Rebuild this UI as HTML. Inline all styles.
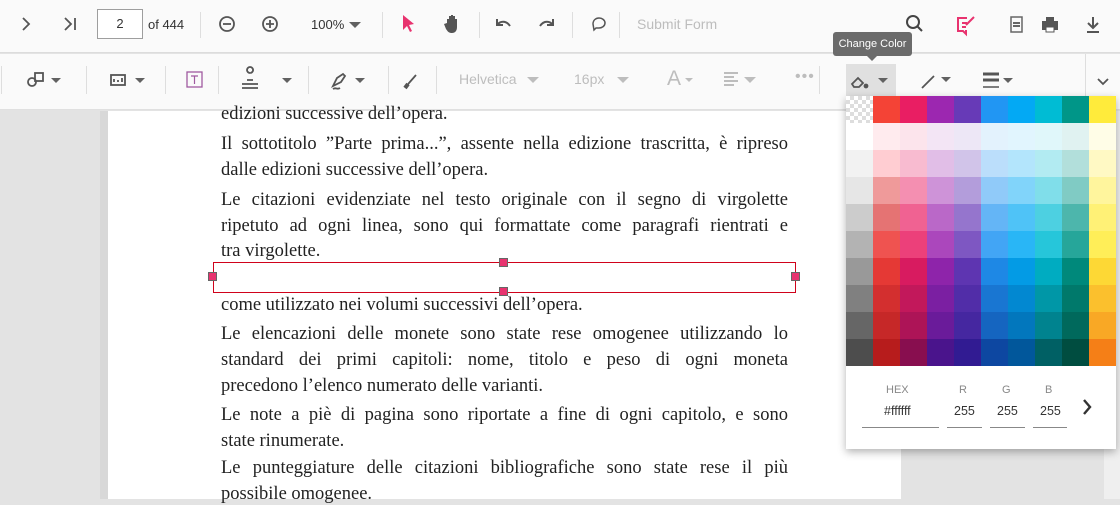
<!DOCTYPE html><html><head><meta charset="utf-8"><style>
*{margin:0;padding:0;box-sizing:border-box}
body{width:1120px;height:499px;overflow:hidden;background:#e3e3e3;font-family:"Liberation Sans",sans-serif;position:relative}
.a{position:absolute}
.tb{left:0;width:1120px;background:#fafafa}
.sep{position:absolute;width:1px;background:#dedede}
.t{position:absolute;font-family:"Liberation Serif",serif;font-size:18.5px;color:#222;left:221px;width:567px;white-space:nowrap}
.j{text-align:justify;text-align-last:justify;white-space:normal}
.g{position:absolute;color:#bdbdbd;font-size:14px}
.c{position:absolute;width:0;height:0;border-left:5px solid transparent;border-right:5px solid transparent;border-top:5px solid #616161}
.h{position:absolute;width:9px;height:9px;background:#e8336f;border:1px solid #666}
</style></head><body>
<div class="a tb" style="top:0;height:53px;border-bottom:1px solid #dcdcdc"></div>
<div class="a tb" style="top:54px;height:56px;border-bottom:1px solid #e0e0e0"></div>
<!-- row1 -->
<svg class="a" style="left:0;top:0" width="900" height="50" fill="none" stroke="#555" stroke-width="1.8">
<path d="M23 18l6 6-6 6"/><path d="M65 18l6 6-6 6M75 18v12"/>
<circle cx="227" cy="24" r="7"/><path d="M223 24h8"/>
<circle cx="270" cy="24" r="7"/><path d="M266 24h8M270 20v8"/>
<path d="M497 19v6h6" stroke-width="2"/><path d="M497 25c3-4 9-5 13 1" stroke-width="2"/>
<path d="M553 19v6h-6" stroke-width="2"/><path d="M553 25c-3-4-9-5-13 1" stroke-width="2"/>
<path d="M593 24c0-4 3-6 6-6s6 2 6 5-3 5-6 5h-3l-2 2z" stroke-width="1.5"/>
</svg>
<svg class="a" style="top:14px;left:401px" width="14" height="20"><path d="M2 1l11 9-5 1 3 6-2 1-3-6-4 4z" fill="#e8336f"/></svg>
<svg class="a" style="left:444px;top:14px" width="16" height="20"><path d="M3 9V5h2v5V2h2v8V1h2v9V2h2v8V5h2v8c0 4-2 6-5 6s-4-1-6-4l-2-5z" fill="#555"/></svg>
<div class="a" style="left:97px;top:9px;width:46px;height:30px;border:1px solid #9e9e9e;background:#fff;font-size:13px;text-align:center;line-height:28px;color:#333">2</div>
<div class="a" style="left:148px;top:17px;font-size:13px;color:#333">of 444</div>
<div class="sep" style="left:200px;top:12px;height:26px"></div>
<div class="a" style="left:311px;top:17px;font-size:13px;color:#333">100%</div>
<div class="c" style="left:349px;top:22px;border-width:6px 6px 0 6px"></div>
<div class="sep" style="left:382px;top:12px;height:26px"></div>
<div class="sep" style="left:479px;top:12px;height:26px"></div>
<div class="sep" style="left:572px;top:12px;height:26px"></div>
<div class="sep" style="left:619px;top:12px;height:26px"></div>
<div class="a" style="left:637px;top:16px;font-size:14px;color:#bdbdbd">Submit Form</div>
<svg class="a" style="left:900px;top:10px" width="200" height="30" fill="none" stroke-width="2">
<circle cx="13" cy="12" r="6" stroke="#444"/><path d="M17 16l5 5" stroke="#444"/>
<path d="M67 8h-9v13h5l3 3v-3h-1" stroke="#e8336f"/><path d="M62 13h5M62 17h4M66 15l8-8" stroke="#e8336f"/>
<rect x="111" y="7" width="11" height="15" stroke="#666" stroke-width="1.5"/><path d="M113 13h7M113 16h7" stroke="#666"/>
<path d="M143 12h14v7h-14z" fill="#555" stroke="#555"/><rect x="146" y="7" width="8" height="4" fill="#555"/><rect x="146" y="17" width="8" height="5" fill="#fff" stroke="#555" stroke-width="1"/>
<path d="M193 7v10M188 13l5 5 5-5M187 22h12" stroke="#555"/>
</svg>
<!-- tooltip -->
<div class="a" style="left:833px;top:32px;width:79px;height:24px;background:#6b6b6b;border-radius:3px;color:#fff;font-size:11px;text-align:center;line-height:24px">Change Color</div>
<div class="a" style="left:867px;top:56px;border-left:5px solid transparent;border-right:5px solid transparent;border-top:5px solid #6b6b6b"></div>
<!-- row2 -->
<div class="a" style="left:846px;top:64px;width:50px;height:32px;background:#e0e0e0"></div>
<svg class="a" style="left:0;top:60px" width="1120" height="40" fill="none" stroke="#555" stroke-width="1.8">
<circle cx="32" cy="22" r="4"/><rect x="35" y="13" width="8" height="8"/>
<rect x="111" y="15" width="14" height="10"/><path d="M114 22v-3M118 22v-2M122 22v-4"/>
<rect x="187" y="12" width="15" height="15" stroke="#a05aa0" stroke-width="1.3"/><path d="M191 16h7M194.5 16v8" stroke="#a05aa0" stroke-width="1.2"/>
<path d="M250 13a3 3 0 1 1 0.1 0M247 20h6M242 24h16M242 28h16"/>
<path d="M333 26l4-8 6-4 2 2-4 6z M333 29c3-2 4 1 7-1"/>
<path d="M406 27l3-4 7-8"/><path d="M405 28l3-4" stroke-width="4"/>
<path d="M852 24l6-6 5 5-4 4h-5z" /><circle cx="866" cy="26" r="1.5" fill="#555"/>
<path d="M922 28l12-12"/>
<path d="M983 14h16" stroke-width="3"/><path d="M983 20h16" stroke-width="3"/><path d="M983 27h16" stroke-width="1.5"/>
<path d="M1098 19l5 5 5-5" stroke="#555"/>
</svg>
<div class="c" style="left:51px;top:78px"></div>
<div class="c" style="left:135px;top:78px"></div>
<div class="c" style="left:282px;top:78px"></div>
<div class="c" style="left:355px;top:78px"></div>
<div class="c" style="left:878px;top:78px"></div>
<div class="c" style="left:941px;top:77px"></div>
<div class="c" style="left:1003px;top:78px"></div>
<div class="sep" style="left:1px;top:66px;height:28px"></div>
<div class="sep" style="left:86px;top:66px;height:28px"></div>
<div class="sep" style="left:165px;top:66px;height:28px"></div>
<div class="sep" style="left:218px;top:66px;height:28px"></div>
<div class="sep" style="left:308px;top:66px;height:28px"></div>
<div class="sep" style="left:388px;top:66px;height:28px"></div>
<div class="sep" style="left:436px;top:66px;height:28px"></div>
<div class="sep" style="left:819px;top:66px;height:28px"></div>
<div class="sep" style="left:1085px;top:54px;height:56px"></div>
<div class="g" style="left:459px;top:71px">Helvetica</div>
<div class="c" style="left:527px;top:77px;border-top-color:#bdbdbd;border-width:6px 6px 0 6px"></div>
<div class="g" style="left:574px;top:71px">16px</div>
<div class="c" style="left:617px;top:77px;border-top-color:#bdbdbd;border-width:6px 6px 0 6px"></div>
<div class="g" style="left:667px;top:67px;font-size:21px">A</div>
<div class="c" style="left:685px;top:78px;border-top-color:#bdbdbd;border-width:4px 4px 0 4px"></div>
<svg class="a" style="left:722px;top:71px" width="40" height="16"><path d="M2 2h14M2 6h10M2 10h14M2 14h10" stroke="#bdbdbd" stroke-width="2"/><path d="M22 6h12l-6 6z" fill="#bdbdbd"/></svg>
<div class="g" style="left:795px;top:68px;font-size:16px;letter-spacing:1px">•••</div>
<!-- page -->
<div class="a" style="left:100px;top:111px;width:8px;height:388px;background:#d8d8d8"></div>
<div class="a" style="left:108px;top:111px;width:793px;height:388px;background:#fff"></div>
<div class="a" style="left:1104px;top:111px;width:16px;height:388px;background:#efefef"></div>
<div class="t" style="top:104px">edizioni successive dell’opera.</div>
<div class="t j" style="top:134px">Il sottotitolo ”Parte prima...”, assente nella edizione trascritta, è ripreso</div>
<div class="t" style="top:160px">dalle edizioni successive dell’opera.</div>
<div class="t j" style="top:190px">Le citazioni evidenziate nel testo originale con il segno di virgolette</div>
<div class="t j" style="top:216px">ripetuto ad ogni linea, sono qui formattate come paragrafi rientrati e</div>
<div class="t" style="top:241px">tra virgolette.</div>
<div class="t" style="top:295px">come utilizzato nei volumi successivi dell’opera.</div>
<div class="t j" style="top:324px">Le elencazioni delle monete sono state rese omogenee utilizzando lo</div>
<div class="t j" style="top:350px">standard dei primi capitoli: nome, titolo e peso di ogni moneta</div>
<div class="t" style="top:376px">precedono l’elenco numerato delle varianti.</div>
<div class="t j" style="top:405px">Le note a piè di pagina sono riportate a fine di ogni capitolo, e sono</div>
<div class="t" style="top:431px">state rinumerate.</div>
<div class="t j" style="top:458px">Le punteggiature delle citazioni bibliografiche sono state rese il più</div>
<div class="t" style="top:484px">possibile omogenee.</div>
<div class="a" style="left:213px;top:262px;width:583px;height:31px;border:1px solid #d0021b"></div>
<div class="h" style="left:208px;top:272px"></div><div class="h" style="left:791px;top:272px"></div>
<div class="h" style="left:499px;top:258px"></div><div class="h" style="left:499px;top:287px"></div>
<!-- palette -->
<div class="a" style="left:846px;top:96px;width:270px;height:353px;background:#fff;box-shadow:0 3px 8px rgba(0,0,0,.3)"></div>
<div class="a" style="left:846px;top:96px;width:270px;height:270px;display:grid;grid-template-columns:repeat(10,27px);grid-auto-rows:27px">
<div style="background:repeating-conic-gradient(#ddd 0 25%,#fff 0 50%) 0 0/8px 8px"></div><div style="background:#F44336"></div><div style="background:#E91E63"></div><div style="background:#9C27B0"></div><div style="background:#673AB7"></div><div style="background:#2196F3"></div><div style="background:#03A9F4"></div><div style="background:#00BCD4"></div><div style="background:#009688"></div><div style="background:#FFEB3B"></div>
<div style="background:#fff"></div><div style="background:#FFEBEE"></div><div style="background:#FCE4EC"></div><div style="background:#F3E5F5"></div><div style="background:#EDE7F6"></div><div style="background:#E3F2FD"></div><div style="background:#E1F5FE"></div><div style="background:#E0F7FA"></div><div style="background:#E0F2F1"></div><div style="background:#FFFDE7"></div>
<div style="background:#F2F2F2"></div><div style="background:#FFCDD2"></div><div style="background:#F8BBD0"></div><div style="background:#E1BEE7"></div><div style="background:#D1C4E9"></div><div style="background:#BBDEFB"></div><div style="background:#B3E5FC"></div><div style="background:#B2EBF2"></div><div style="background:#B2DFDB"></div><div style="background:#FFF9C4"></div>
<div style="background:#E6E6E6"></div><div style="background:#EF9A9A"></div><div style="background:#F48FB1"></div><div style="background:#CE93D8"></div><div style="background:#B39DDB"></div><div style="background:#90CAF9"></div><div style="background:#81D4FA"></div><div style="background:#80DEEA"></div><div style="background:#80CBC4"></div><div style="background:#FFF59D"></div>
<div style="background:#CCCCCC"></div><div style="background:#E57373"></div><div style="background:#F06292"></div><div style="background:#BA68C8"></div><div style="background:#9575CD"></div><div style="background:#64B5F6"></div><div style="background:#4FC3F7"></div><div style="background:#4DD0E1"></div><div style="background:#4DB6AC"></div><div style="background:#FFF176"></div>
<div style="background:#B3B3B3"></div><div style="background:#EF5350"></div><div style="background:#EC407A"></div><div style="background:#AB47BC"></div><div style="background:#7E57C2"></div><div style="background:#42A5F5"></div><div style="background:#29B6F6"></div><div style="background:#26C6DA"></div><div style="background:#26A69A"></div><div style="background:#FFEE58"></div>
<div style="background:#999999"></div><div style="background:#E53935"></div><div style="background:#D81B60"></div><div style="background:#8E24AA"></div><div style="background:#5E35B1"></div><div style="background:#1E88E5"></div><div style="background:#039BE5"></div><div style="background:#00ACC1"></div><div style="background:#00897B"></div><div style="background:#FDD835"></div>
<div style="background:#808080"></div><div style="background:#D32F2F"></div><div style="background:#C2185B"></div><div style="background:#7B1FA2"></div><div style="background:#512DA8"></div><div style="background:#1976D2"></div><div style="background:#0288D1"></div><div style="background:#0097A7"></div><div style="background:#00796B"></div><div style="background:#FBC02D"></div>
<div style="background:#666666"></div><div style="background:#C62828"></div><div style="background:#AD1457"></div><div style="background:#6A1B9A"></div><div style="background:#4527A0"></div><div style="background:#1565C0"></div><div style="background:#0277BD"></div><div style="background:#00838F"></div><div style="background:#00695C"></div><div style="background:#F9A825"></div>
<div style="background:#4D4D4D"></div><div style="background:#B71C1C"></div><div style="background:#880E4F"></div><div style="background:#4A148C"></div><div style="background:#311B92"></div><div style="background:#0D47A1"></div><div style="background:#01579B"></div><div style="background:#006064"></div><div style="background:#004D40"></div><div style="background:#F57F17"></div>
</div>
<div class="a" style="left:886px;top:384px;font-size:11px;color:#888">HEX</div>
<div class="a" style="left:959px;top:384px;font-size:11px;color:#888">R</div>
<div class="a" style="left:1002px;top:384px;font-size:11px;color:#888">G</div>
<div class="a" style="left:1045px;top:384px;font-size:11px;color:#888">B</div>
<div class="a" style="left:884px;top:404px;font-size:12.5px;color:#333">#ffffff</div>
<div class="a" style="left:954px;top:404px;font-size:12.5px;color:#333">255</div>
<div class="a" style="left:997px;top:404px;font-size:12.5px;color:#333">255</div>
<div class="a" style="left:1040px;top:404px;font-size:12.5px;color:#333">255</div>
<div class="a" style="left:862px;top:427px;width:77px;height:1px;background:#888"></div>
<div class="a" style="left:947px;top:427px;width:35px;height:1px;background:#888"></div>
<div class="a" style="left:990px;top:427px;width:35px;height:1px;background:#888"></div>
<div class="a" style="left:1033px;top:427px;width:34px;height:1px;background:#888"></div>
<svg class="a" style="left:1081px;top:398px" width="14" height="18"><path d="M3 2l6 7-6 7" fill="none" stroke="#333" stroke-width="2.4"/></svg>
</body></html>
